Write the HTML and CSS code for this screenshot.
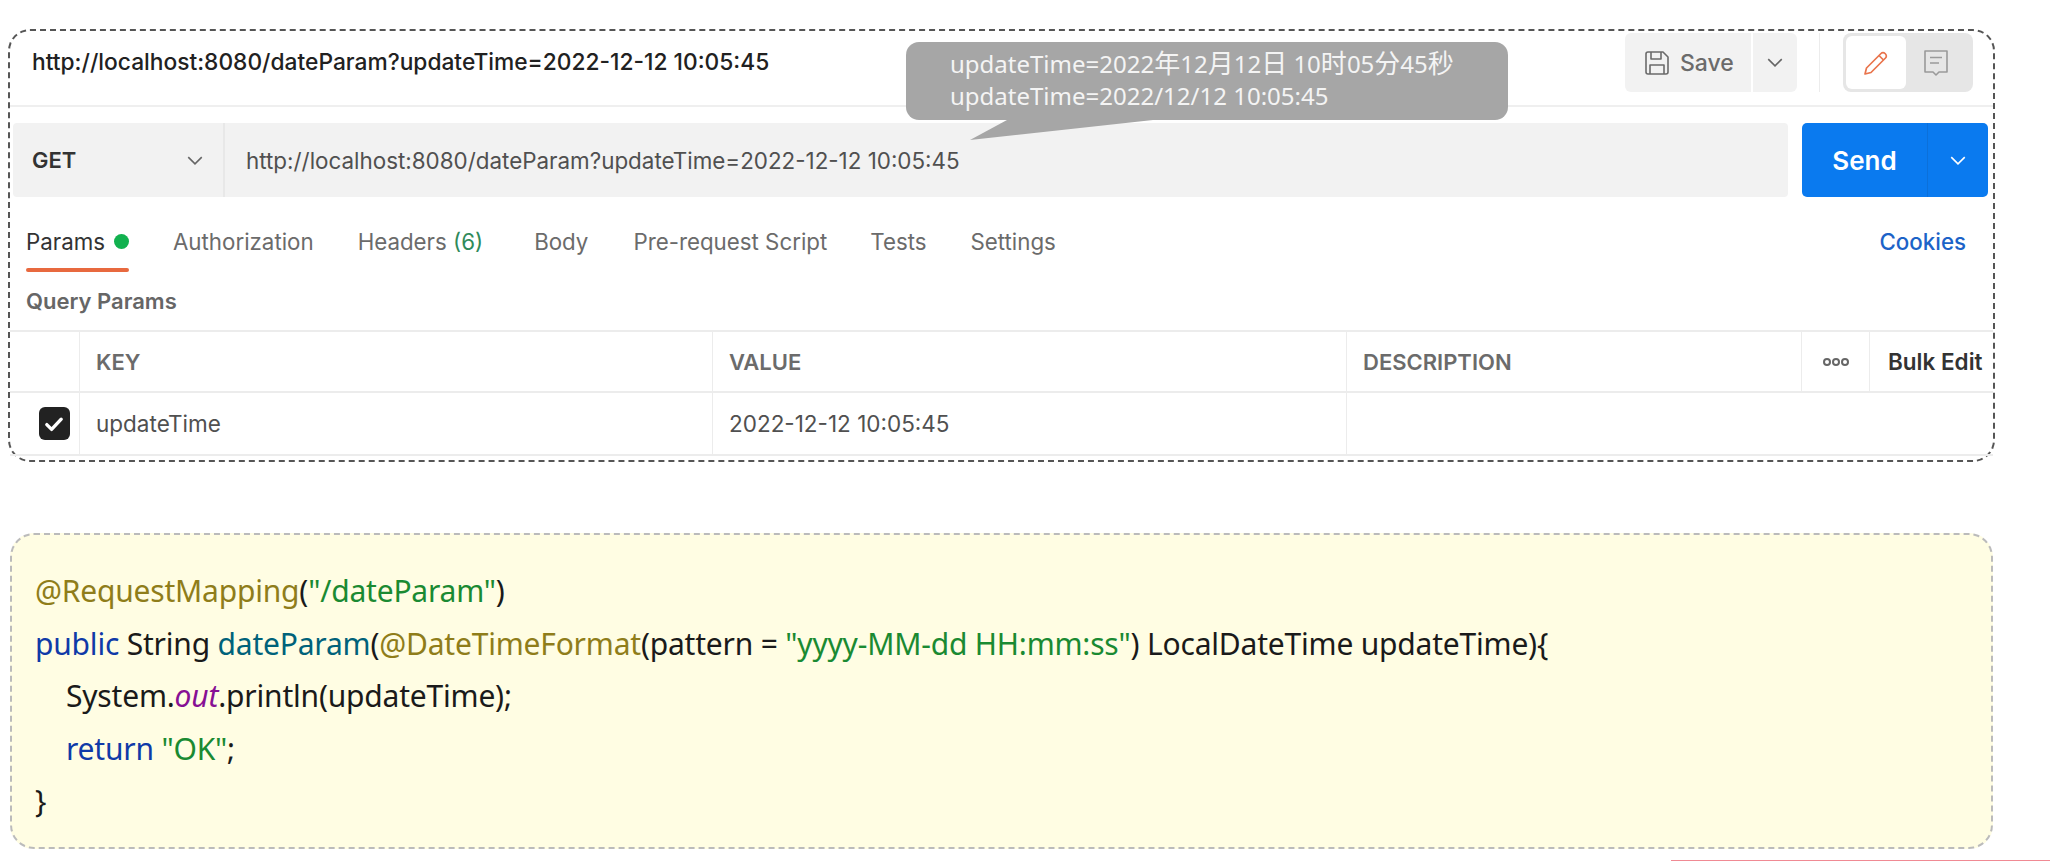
FILE: index.html
```html
<!DOCTYPE html>
<html lang="en">
<head>
<meta charset="utf-8">
<title>dateParam</title>
<link rel="stylesheet" href="styles.css">
</head>
<body>
<section class="panel">
  <header class="titlebar">
    <div class="title">http://localhost:8080/dateParam?updateTime=2022-12-12 10:05:45</div>
    <div class="save-group">
      <div class="save">
        <svg class="save-icon" viewBox="0 0 26 26" fill="none" stroke="#6b6b6b" stroke-width="1.6" stroke-linejoin="round"><path d="M2 4a2 2 0 0 1 2-2h15l5 5v15a2 2 0 0 1-2 2H4a2 2 0 0 1-2-2z"/><path d="M7 2v7h10V2M6 24v-9h14v9"/></svg>
        <span>Save</span>
      </div>
      <div class="save-more"><svg class="chev" viewBox="0 0 14 8" fill="none" stroke="#666" stroke-width="1.4"><path d="M1 1l6 6 6-6"/></svg></div>
    </div>
    <div class="vsep"></div>
    <div class="mode">
      <div class="mode-on"><svg viewBox="0 0 28 28" width="28" height="28" fill="none" stroke="#e9744c" stroke-width="1.7" stroke-linejoin="round"><path d="M3 25l1.5-6L19 4.500a2.800 2.800 0 0 1 4 0l.5.5a2.800 2.800 0 0 1 0 4L9 23.500z"/><path d="M17 6.500l4.500 4.500"/></svg></div>
      <div class="mode-off"><svg viewBox="0 0 28 28" width="28" height="28" fill="none" stroke="#9a9a9a" stroke-width="1.6" stroke-linejoin="round"><path d="M3 2h22v21h-8l-3 3-3-3H3z"/><path d="M8 8.500h12M8 14h9"/></svg></div>
    </div>
  </header>

  <div class="request">
    <div class="urlbar">
      <div class="method"><span>GET</span><svg class="chev" viewBox="0 0 14 8" fill="none" stroke="#666" stroke-width="1.4"><path d="M1 1l6 6 6-6"/></svg></div>
      <div class="url">http://localhost:8080/dateParam?updateTime=2022-12-12 10:05:45</div>
    </div>
    <div class="send">
      <span class="send-label">Send</span>
      <span class="send-more"><svg class="chev" viewBox="0 0 14 8" fill="none" stroke="#fff" stroke-width="1.4"><path d="M1 1l6 6 6-6"/></svg></span>
    </div>
  </div>

  <nav class="tabs">
    <a class="tab active">Params<i class="dot"></i></a>
    <a class="tab">Authorization</a>
    <a class="tab wide">Headers <em>(6)</em></a>
    <a class="tab body-tab">Body</a>
    <a class="tab pre-tab">Pre-request Script</a>
    <a class="tab">Tests</a>
    <a class="tab">Settings</a>
    <a class="cookies">Cookies</a>
  </nav>

  <div class="qp">Query Params</div>

  <div class="table">
    <div class="cell c-check c-top"></div>
    <div class="cell c-key head">KEY</div>
    <div class="cell c-val head">VALUE</div>
    <div class="cell c-desc head">DESCRIPTION</div>
    <div class="cell c-dots"><i></i><i></i><i></i></div>
    <div class="cell c-bulk">Bulk Edit</div>
    <div class="cell c-check"><span class="check"><svg viewBox="0 0 20 20" width="24" height="24" fill="none" stroke="#fff" stroke-width="2.800" stroke-linecap="round" stroke-linejoin="round"><path d="M4 10.500l4 4 8-8.500"/></svg></span></div>
    <div class="cell c-key body">updateTime</div>
    <div class="cell c-val body">2022-12-12 10:05:45</div>
    <div class="cell c-wide"></div>
  </div>

  <div class="bubble">
    <p>updateTime=2022<span class="cjk">年</span>12<span class="cjk">月</span>12<span class="cjk">日</span> 10<span class="cjk">时</span>05<span class="cjk">分</span>45<span class="cjk">秒</span></p>
    <p>updateTime=2022/12/12 10:05:45</p>
    <svg class="tail" viewBox="0 0 183 20" width="183" height="20"><path d="M0 20L37 0H183z" fill="#a6a6a6"/></svg>
  </div>
</section>

<section class="code">
  <div class="line"><span class="ann">@RequestMapping</span>(<span class="str">"/dateParam"</span>)</div>
  <div class="line"><span class="kw">public</span> String <span class="fn">dateParam</span>(<span class="ann">@DateTimeFormat</span>(pattern = <span class="str">"yyyy-MM-dd HH:mm:ss"</span>) LocalDateTime updateTime){</div>
  <div class="line ind">System.<span class="fld">out</span>.println(updateTime);</div>
  <div class="line ind"><span class="kw">return</span> <span class="str">"OK"</span>;</div>
  <div class="line">}</div>
</section>

<div class="pink"></div>
</body>
</html>
```
FILE: styles.css
```css
* { box-sizing: border-box; }
html, body { margin: 0; padding: 0; background: #fff; }
body { width: 2050px; height: 861px; overflow: hidden; font-family: Inter, "Noto Sans CJK SC", sans-serif; color: #333; }
p { margin: 0; }

.panel {
  position: relative;
  margin: 29px 0 0 8px;
  width: 1987px;
  height: 433px;
  border: 2px dashed #555;
  border-radius: 22px;
  background: #fff;
}

.titlebar {
  display: flex;
  align-items: flex-start;
  height: 76px;
  padding: 2px 20px 0 22px;
  border-bottom: 2px solid #efefef;
}
.title { flex: 1; font-size: 22.750px; line-height: 58px; font-weight: 500; color: #212121; }
.save-group { display: flex; height: 59px; }
.save {
  display: flex; align-items: center; gap: 10px;
  width: 126px; padding-left: 19px;
  background: #f2f2f2; border-radius: 6px 0 0 6px;
  font-size: 23px; font-weight: 500; color: #6b6b6b;
}
.save-icon { width: 26px; height: 26px; }
.save-more {
  display: flex; align-items: center; justify-content: center;
  width: 44px; margin-left: 2px;
  background: #f2f2f2; border-radius: 0 6px 6px 0;
}
.chev { width: 16px; height: 9px; }
.vsep { width: 1px; height: 59px; margin: 0 23px 0 22px; background: #ececec; }
.mode { display: flex; width: 130px; height: 59px; padding: 3px; background: #e6e6e6; border-radius: 8px; }
.mode-on, .mode-off { display: flex; align-items: center; justify-content: center; }
.mode-on { width: 60px; background: #fff; border-radius: 6px; }
.mode-off { flex: 1; padding-right: 4px; }

.request { display: flex; gap: 14px; height: 74px; margin: 16px 5px 0 3px; }
.urlbar { display: flex; flex: 1; background: #f2f2f2; border-radius: 4px; }
.method {
  display: flex; align-items: center; justify-content: space-between;
  width: 212px; padding: 0 20px 0 19px;
  border-right: 2px solid #e8e8e8;
  font-size: 22px; font-weight: 600; color: #333;
}
.url { display: flex; align-items: center; padding-left: 21px; font-size: 22.400px; color: #505050; }
.send { display: flex; width: 186px; background: #0a7aef; border-radius: 5px; color: #fff; }
.send-label { display: flex; align-items: center; justify-content: center; width: 126px; border-right: 1px solid #0b70da; font-size: 26px; font-weight: 600; }
.send-more { display: flex; align-items: center; justify-content: center; flex: 1; }

.tabs { display: flex; align-items: flex-start; height: 68px; padding: 29px 0 0 16px; font-size: 22.300px; color: #6b6b6b; }
.tab { margin-right: 44px; position: relative; display: flex; align-items: center; height: 30px; white-space: pre; }
.tab.wide { margin-right: 51px; }
.tab.body-tab { margin-right: 45px; }
.tab.pre-tab { margin-right: 43px; }
.tab.active { color: #333; }
.tab.active::after { content: ""; position: absolute; left: 0; right: 0; top: 42px; height: 4px; background: #e8693f; border-radius: 2px; }
.tab em { font-style: normal; color: #2f8a5a; }
.dot { width: 15px; height: 15px; border-radius: 50%; background: #12b14f; margin-left: 9px; }
.cookies { margin-left: auto; margin-right: 27px; display: flex; align-items: center; height: 30px; color: #1c63c8; font-weight: 500; }

.qp { height: 65px; padding: 23px 0 0 16px; font-size: 22px; font-weight: 600; color: #666; }

.table {
  display: grid;
  grid-template-columns: 70px 633px 634px 455px 68px 1fr;
  grid-template-rows: 61px 61px;
  border-top: 2px solid #ececec;
  border-bottom: 2px solid #ececec;
}
.cell { display: flex; align-items: center; border-right: 1px solid #ececec; font-size: 22px; }
.cell.head { font-weight: 600; color: #6b6b6b; padding-left: 16px; border-bottom: 2px solid #ececec; }
.c-check { justify-content: center; padding-left: 19px; }
.c-check.c-top { border-bottom: 2px solid #ececec; }
.c-val.body, .c-key.body { padding-left: 16px; font-size: 22.500px; color: #505050; }
.c-dots { gap: 1px; justify-content: center; border-bottom: 2px solid #ececec; }
.c-dots i { width: 8px; height: 8px; border: 2px solid #666; border-radius: 50%; }
.c-bulk { padding-left: 18px; font-size: 22.500px; font-weight: 600; color: #333; border-right: 0; border-bottom: 2px solid #ececec; }
.c-wide { grid-column: 4 / 7; border-right: 0; }
.check { display: flex; flex: none; align-items: center; justify-content: center; width: 31px; height: 33px; background: #222; border-radius: 6px; }

.bubble {
  position: absolute;
  left: 896px;
  top: 11px;
  width: 602px;
  height: 78px;
  padding: 5px 0 0 44px;
  background: #a6a6a6;
  border-radius: 13px;
  color: #f4f4f4;
  font-family: "Noto Sans", "Noto Sans CJK SC", sans-serif;
  font-size: 24px;
  line-height: 32px;
}
.cjk { font-size: 26px; }
.tail { position: absolute; left: 64px; top: 78px; }

.code {
  margin: 71px 0 0 10px;
  width: 1983px;
  height: 316px;
  padding: 30px 0 0 23px;
  background: #fffde3;
  border: 2px dashed #bbb;
  border-radius: 24px;
  font-family: "Noto Sans", "Noto Sans CJK SC", sans-serif;
  font-size: 30px;
  letter-spacing: -0.200px;
  line-height: 52.500px;
  color: #1a1a1a;
}
.line { height: 52.500px; white-space: pre; }
.ind { padding-left: 31px; }
.ann { color: #8f7d1a; }
.str { color: #1a8a32; }
.kw { color: #0f3aa8; }
.fn { color: #00627a; }
.fld { color: #871094; font-style: italic; }

.pink { width: 379px; height: 1px; margin: 11px 0 0 auto; background: #f08a94; }
```
